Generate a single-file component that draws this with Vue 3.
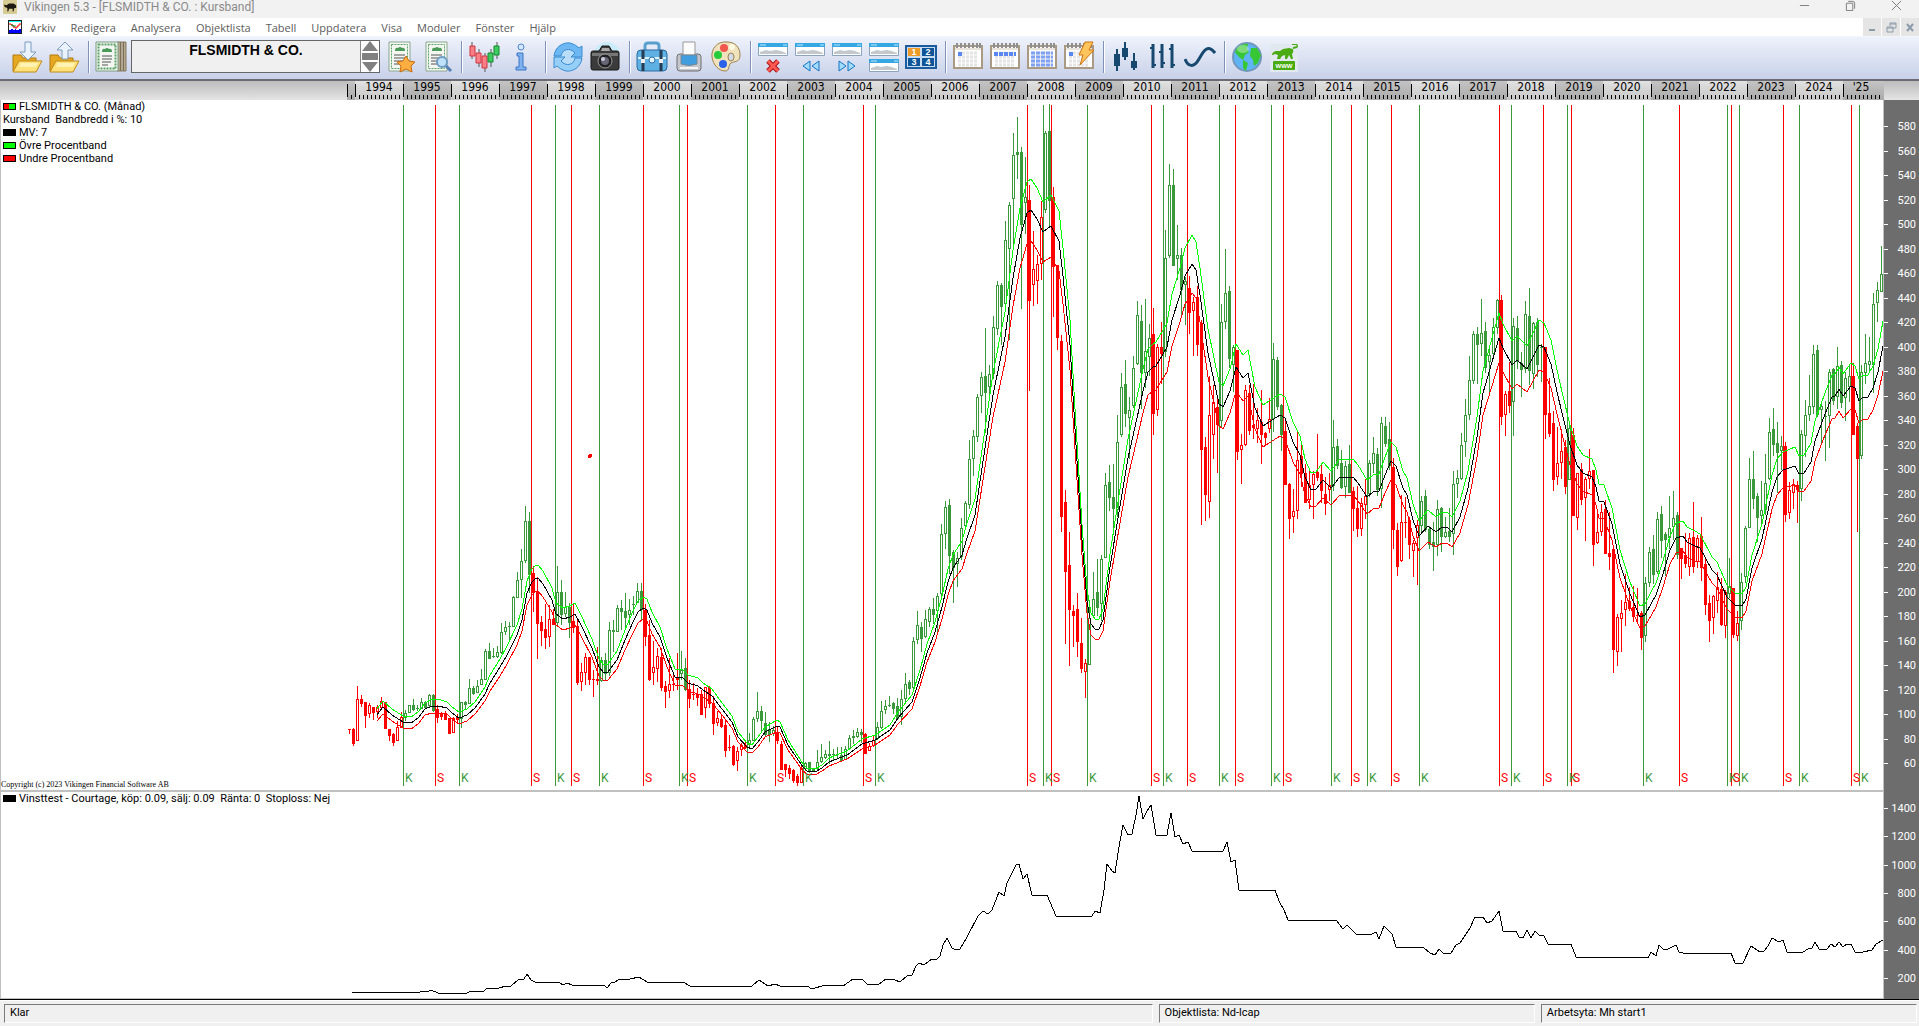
<template>
  <div class="app">
    <!-- Title bar -->
    <header class="title-bar">
      <svg class="app-icon" viewBox="0 0 16 16" aria-hidden="true">
        <rect width="16" height="16" rx="1" fill="#d6cc94" />
        <path d="M1 5l3 1 3-2 5 0 3 2 0 3-2 0-1 4-1 0 0-3-4 0-1 3-1 0 0-4-3-1z" fill="#1c1a12" />
      </svg>
      <h1 class="title">Vikingen 5.3 - [FLSMIDTH &amp; CO. : Kursband]</h1>
      <div class="window-buttons">
        <button type="button" aria-label="Minimera">
          <svg viewBox="0 0 12 12"><path d="M1 6h10" /></svg>
        </button>
        <button type="button" aria-label="Återställ">
          <svg viewBox="0 0 12 12"><path d="M1.500 3.500h7v8h-7zM3.500 1.500h5q2 0 2 2v6" /></svg>
        </button>
        <button type="button" aria-label="Stäng">
          <svg viewBox="0 0 12 12"><path d="M1 1l10 10M11 1L1 11" /></svg>
        </button>
      </div>
    </header>

    <!-- Menu -->
    <nav class="menu-bar">
      <svg class="menu-icon" viewBox="0 0 14 14" aria-hidden="true">
        <rect width="14" height="14" fill="#222" />
        <rect x="1" y="1" width="12" height="12" fill="#fff" />
        <path d="M1 1h12v1H1z" fill="#0ff" />
        <path d="M1 4h2v1h2v2h2v1h2v-2h2v-2h2" fill="none" stroke="#f00" />
        <path d="M3 5h2v1h3" fill="none" stroke="#093" />
        <path d="M1 10h2v-1h2v1h2v-1h1v1h3v-1h2v4H1z" fill="#00f" />
      </svg>
      <a v-for="item in menu" :key="item" href="#">{{ item }}</a>
      <div class="mdi-buttons">
        <button type="button" aria-label="Minimera fönster">
          <svg viewBox="0 0 12 12"><path d="M3 9h6" stroke-width="2" /></svg>
        </button>
        <button type="button" aria-label="Återställ fönster">
          <svg viewBox="0 0 12 12"><path d="M2 6h6v5H2zM2 7h6M5 5V2h6v5H8M5 3h6" /></svg>
        </button>
        <button type="button" aria-label="Stäng fönster">
          <svg viewBox="0 0 12 12"><path d="M3 3l6 7M9 3l-6 7" stroke-width="2" /></svg>
        </button>
      </div>
    </nav>

    <!-- Toolbar -->
    <div class="toolbar">
      <template v-for="(tool, index) in toolsLeft" :key="'l' + index">
        <span v-if="tool === '|'" class="separator"></span>
        <button v-else type="button" class="tool" :aria-label="tool">
          <svg viewBox="0 0 32 32" v-html="icons[tool]"></svg>
        </button>
      </template>
      <div class="object-picker">
        <input v-model="objectName" type="text" aria-label="Objekt" />
        <div class="spinner">
          <button type="button" aria-label="Föregående objekt">
            <svg viewBox="0 0 18 10"><path d="M9 0l8 10H1z" /></svg>
          </button>
          <button type="button" aria-label="Välj objekt" class="middle">
            <svg viewBox="0 0 18 8"><path d="M1 0h16v7H1z" /></svg>
          </button>
          <button type="button" aria-label="Nästa objekt">
            <svg viewBox="0 0 18 10"><path d="M1 0h16L9 10z" /></svg>
          </button>
        </div>
      </div>
      <template v-for="(tool, index) in toolsRight" :key="'r' + index">
        <span v-if="tool === '|'" class="separator"></span>
        <button v-else type="button" class="tool" :aria-label="tool">
          <svg viewBox="0 0 32 32" v-html="icons[tool]"></svg>
        </button>
      </template>
    </div>

    <!-- Time ruler -->
    <svg class="ruler" viewBox="0 0 1919 19" preserveAspectRatio="none" shape-rendering="crispEdges">
      <defs>
        <linearGradient id="rulerEdge" x1="0" y1="0" x2="0" y2="1">
          <stop offset="0" stop-color="#bcbcbc" /><stop offset="1" stop-color="#e4e4e4" />
        </linearGradient>
        <linearGradient id="rulerLight" x1="0" y1="0" x2="0" y2="1">
          <stop offset="0" stop-color="#e2e2e2" /><stop offset="1" stop-color="#c6c6c6" />
        </linearGradient>
        <linearGradient id="rulerDark" x1="0" y1="0" x2="0" y2="1">
          <stop offset="0" stop-color="#c4c4c4" /><stop offset="1" stop-color="#aaaaaa" />
        </linearGradient>
      </defs>
      <rect width="1919" height="19" fill="url(#rulerEdge)" />
      <rect x="347" width="8" height="19" fill="url(#rulerDark)" />
      <g v-for="(year, index) in years" :key="year">
        <rect
          :x="355 + index * 48"
          :width="index === 31 ? 41 : 48"
          height="19"
          :fill="index % 2 ? 'url(#rulerDark)' : 'url(#rulerLight)'"
        />
        <text :x="(index === 31 ? 1861 : 379 + index * 48)" y="10" class="year">{{ year }}</text>
      </g>
      <path :d="rulerTicks" fill="#000" />
    </svg>

    <!-- Charts -->
    <main class="charts">
      <div class="panes">
        <section class="pane price-pane">
          <svg viewBox="1 100 1882 690" preserveAspectRatio="none" shape-rendering="crispEdges">
            <g v-for="candle in candles" :key="candle.x">
              <path :d="candle.wick" :fill="candle.color" />
              <path v-if="candle.hole" :d="candle.hole" fill="#fff" />
            </g>
            <rect
              v-for="signal in signals"
              :key="signal.x"
              :x="signal.x"
              y="105"
              width="1"
              height="681"
              :fill="signal.color"
            />
            <polyline :points="upperBand" class="line upper" />
            <polyline :points="average" class="line average" />
            <polyline :points="lowerBand" class="line lower" />
            <text
              v-for="signal in signals"
              :key="'t' + signal.x"
              :x="signal.x + 2"
              y="782"
              class="signal"
              :fill="signal.color"
            >{{ signal.type }}</text>
            <ellipse cx="590" cy="456" rx="2" ry="2" fill="#f00" />
          </svg>
          <ul class="legend">
            <li><i class="swatch split"></i>FLSMIDTH &amp; CO. (Månad)</li>
            <li>Kursband&nbsp; Bandbredd i %: 10</li>
            <li><i class="swatch black"></i>MV: 7</li>
            <li><i class="swatch lime"></i>Övre Procentband</li>
            <li><i class="swatch red"></i>Undre Procentband</li>
          </ul>
          <p class="copyright">Copyright (c) 2023 Vikingen Financial Software AB</p>
        </section>
        <section class="pane profit-pane">
          <svg viewBox="1 792 1882 206" preserveAspectRatio="none" shape-rendering="crispEdges">
            <polyline :points="profit" class="line average" />
          </svg>
          <ul class="legend">
            <li><i class="swatch black"></i>Vinsttest - Courtage, köp: 0.09, sälj: 0.09&nbsp; Ränta: 0&nbsp; Stoploss: Nej</li>
          </ul>
        </section>
      </div>
      <svg class="scale" viewBox="0 100 35 899" preserveAspectRatio="none" shape-rendering="crispEdges">
        <g v-for="mark in scaleMarks" :key="mark.y">
          <rect x="0" :y="mark.y" width="4" height="1" fill="#fff" />
          <text x="32" :y="mark.y + 4">{{ mark.label }}</text>
        </g>
      </svg>
    </main>

    <!-- Status bar -->
    <footer class="status-bar">
      <div class="field">Klar</div>
      <div class="field">Objektlista: Nd-lcap</div>
      <div class="field">Arbetsyta: Mh start1</div>
    </footer>
  </div>
</template>

<script setup>
import { ref } from "vue";

const objectName = ref("FLSMIDTH & CO.");

const menu = ["Arkiv", "Redigera", "Analysera", "Objektlista", "Tabell", "Uppdatera", "Visa", "Moduler", "Fönster", "Hjälp"];

const toolsLeft = ["Hämta", "Spara", "|", "Anteckningar"];
const toolsRight = [
  "Favorit", "Sök", "|", "Diagram", "Info", "|", "Uppdatera", "Kamera", "|",
  "Portfölj", "Skriv ut", "Färger", "|", "Stäng fönster", "Bakåt", "Framåt", "Dela", "Layouter", "|",
  "Dag", "Vecka", "Månad", "Intradag", "|", "Candlestick", "Staplar", "Linje", "|", "Webb", "Vikingen",
];

// Icon parts shared by several buttons
const folder =
  '<path d="M2 14h8l2 3h13v13H2z" fill="#e6a820" stroke="#b27a10"/>' +
  '<path d="M8 20h23l-6 11H2z" fill="#ffe27a" stroke="#c08a18"/><path d="M10 22h17l-2 4H8z" fill="#fff3b4"/>';
const sheet =
  '<path d="M5 1h21v29H5z" fill="#f4f7f1" stroke="#8aa78e"/><path d="M7.500 3.500h16v24h-16z" fill="none" stroke="#5aa368" stroke-dasharray="2 1"/>' +
  '<path d="M11 10q0-4 3-3 2-2 4 0 3-1 3 3z" fill="#4a9a58"/><path d="M10 14h11M10 17h11M10 20h9M10 23h7" stroke="#555"/>';
const frame = (y) =>
  `<path d="M1.500 ${y + 0.5}h29v12h-29z" fill="#fff" stroke="#8ba3bd"/><path d="M1 ${y}h30v4H1z" fill="#35a8e4"/>` +
  `<path d="M3 ${y + 2}h6M26 ${y + 2}h4" stroke="#bfe7fb"/><path d="M3 ${y + 11}v-2l6-2 4 1 6-1 5 1 5 2v1z" fill="#c3c8cc"/>`;
const calendar =
  '<path d="M2 5h28v22H2z" fill="#fff" stroke="#aa9a84" stroke-width="2"/><path d="M3 7h26v2H3z" fill="#e9e4dc"/>' +
  '<path d="M5 2v5M9 2v5M13 2v5M17 2v5M21 2v5M25 2v5M28 2v5" stroke="#8f8f8f" stroke-width="2"/>' +
  '<path d="M6 12h20M6 16h20M6 20h20M6 24h20" stroke="#e4e4e4" stroke-width="3" stroke-dasharray="3 1"/>';

const icons = {
  "Hämta": folder + '<path d="M14 1h6v10h5l-8 8-8-8h5z" fill="#eaf3fb" stroke="#7d9cbc"/>',
  "Spara": folder + '<path d="M14 18h6V9h5L17 1 9 9h5z" fill="#eaf3fb" stroke="#7d9cbc"/>',
  "Anteckningar":
    '<path d="M22 1h9v29h-9z" fill="#b3a88f" stroke="#85795f"/><path d="M25.500 1v29M28.500 1v29" stroke="#7a7059"/>' +
    '<path d="M1 1h22v29H1z" fill="#f4f7f1" stroke="#7d9a80"/><path d="M3.500 3.500h17v24h-17z" fill="none" stroke="#5aa368" stroke-width="2" stroke-dasharray="2 1"/>' +
    '<path d="M7 11q0-4 3-3 2-2 4 0 3-1 3 3z" fill="#4a9a58"/><path d="M7 15h10M7 18h10M7 21h9M7 24h6" stroke="#555"/>',
  "Favorit": sheet + '<path d="M22 15l3 5 6 1-4 4 1 6-6-3-6 3 1-6-4-4 6-1z" fill="#ffae42" stroke="#c9690b"/>',
  "Sök": sheet + '<circle cx="21" cy="21" r="5" fill="#bfe2fa" stroke="#6f9cc4" stroke-width="2"/><path d="M25 25l5 5" stroke="#5580b5" stroke-width="3"/>',
  "Diagram":
    '<path d="M4 1v17M11 8v18M17 12v19M23 8v18M29 1v17" stroke="#555"/>' +
    '<path d="M2 5h5v10H2zM8 12h5v10H8zM14 15h5v12h-5z" fill="#fb7f86" stroke="#d0353f"/>' +
    '<path d="M20 12h5v9h-5zM26 5h5v9h-5z" fill="#3ecb5f" stroke="#12892f"/>',
  "Info":
    '<circle cx="16" cy="6" r="3" fill="#d5e8fb" stroke="#4a83cf"/><path d="M12 12h6v14h3v3H11v-3h3V15h-2z" fill="#7fb2ee" stroke="#3a74c6"/>',
  "Uppdatera":
    '<circle cx="16" cy="16" r="14" fill="#b9dcf8"/><path d="M2 15C3 6 11 1 18 2c4 1 7 3 9 5l3-2v11H19l4-4c-5-6-13-4-14 3z" fill="#6db8f2" stroke="#3b8bd2"/>' +
    '<path d="M30 17c-1 9-9 14-16 13-4-1-7-3-9-5l-3 2V16h11l-4 4c5 6 13 4 14-3z" fill="#95cff8" stroke="#3b8bd2"/>',
  "Kamera":
    '<circle cx="18" cy="14" r="13" fill="#c9ecf8"/><path d="M2 12q0-2 2-2h6l3-5h7l3 5h5q2 0 2 2v15q0 2-2 2H4q-2 0-2-2z" fill="#3b3b3b" stroke="#191919"/>' +
    '<path d="M3 12h26v3H3z" fill="#777"/><path d="M13 7h7l1 3h-9z" fill="#aaa"/><circle cx="16" cy="20" r="7" fill="#222" stroke="#999"/><circle cx="16" cy="20" r="4" fill="#667"/><circle cx="14" cy="18" r="2" fill="#ccd"/>',
  "Portfölj":
    '<path d="M9 10V5q0-3 3-3h8q3 0 3 3v5" fill="none" stroke="#5aa0cf" stroke-width="3"/><rect x="1" y="9" width="30" height="21" rx="4" fill="#5fb1e4" stroke="#2a6da4"/>' +
    '<path d="M2 17h28" stroke="#d9f0fd" stroke-width="2"/><path d="M7 9v21M25 9v21" stroke="#263c52" stroke-width="3"/><circle cx="16" cy="19" r="3" fill="#e8f6ff" stroke="#2a6da4"/><path d="M5 18h4v4H5zM23 18h4v4h-4z" fill="#eee"/>',
  "Skriv ut":
    '<path d="M4 16q0-3 3-3h18q3 0 3 3v11q0 3-3 3H7q-3 0-3-3z" fill="#c4c8ce" stroke="#6d6d6d"/><path d="M10 1h12v13H10z" fill="#fbfbfb" stroke="#999"/>' +
    '<path d="M8 14h16v9q-8 3-16 0z" fill="#3f9de0" stroke="#7b8794"/><path d="M7 27h18" stroke="#f4f4f4" stroke-width="2"/>',
  "Färger":
    '<path d="M17 1C7 0 1 8 2 16s7 14 13 14c5 0 3-6 6-8s9 0 9-8S25 1 17 1z" fill="#efe2bd" stroke="#9c834b"/>' +
    '<circle cx="14" cy="7" r="4" fill="#f2584c"/><circle cx="8" cy="14" r="4" fill="#26cc3a"/><circle cx="13" cy="23" r="4" fill="#2b62ea"/><circle cx="22" cy="6" r="3" fill="#fff8e0"/><ellipse cx="21" cy="16" rx="3" ry="4" fill="#d3dbe9" stroke="#9c834b"/>',
  "Stäng fönster": frame(2) + '<path d="M11 20l10 10M21 20L11 30" stroke="#a81212" stroke-width="5"/><path d="M11 20l10 10M21 20L11 30" stroke="#ff5a52" stroke-width="3"/>',
  "Bakåt": frame(2) + '<path d="M16 20v10l-7-5zM25 20v10l-7-5z" fill="#9fdcff" stroke="#1673c0"/>',
  "Framåt": frame(2) + '<path d="M8 20v10l7-5zM17 20v10l7-5z" fill="#9fdcff" stroke="#1673c0"/>',
  "Dela": frame(2) + frame(18),
  "Layouter":
    '<path d="M1 5h30v22H1z" fill="#c8ddf2" stroke="#1d5c9c" stroke-width="2"/><path d="M3 7h12v8H3z" fill="#ef9b28"/><path d="M17 7h12v8H17zM3 17h12v8H3zM17 17h12v8H17z" fill="#0f5597"/>' +
    '<g fill="#fff" font-family="Liberation Sans, sans-serif" font-size="9" font-weight="700" text-anchor="middle"><text x="9" y="14">1</text><text x="23" y="14">2</text><text x="9" y="24">3</text><text x="23" y="24">4</text></g>',
  "Dag": calendar + '<path d="M6 11h4v4H6z" fill="#5a86f0"/>',
  "Vecka": calendar + '<path d="M5 13h22" stroke="#5a86f0" stroke-width="4" stroke-dasharray="4 1"/>',
  "Månad": calendar + '<path d="M5 12h22M5 16h22M5 20h22M5 24h22" stroke="#7fa1f4" stroke-width="3" stroke-dasharray="4 1"/>',
  "Intradag": calendar + '<path d="M6 11h4v4H6z" fill="#5a86f0"/><path d="M22 1h8l-4 8h5L17 24l3-10h-4z" fill="#ffc45c" stroke="#cf7410"/>',
  "Candlestick": '<path d="M7 8v22M15 1v18M24 12v17" stroke="#17486f" stroke-width="2"/><path d="M4 13h6v12H4zM12 7h6v9h-6zM21 20h6v7h-6z" fill="#17486f"/>',
  "Staplar": '<path d="M6 3v24M15 3v24M25 3v24" stroke="#17486f" stroke-width="3"/><path d="M3 7h3M6 24h3M12 11h3M15 22h3M22 8h3M25 24h3" stroke="#17486f" stroke-width="2"/>',
  "Linje": '<path d="M1 18c3 8 9 9 14 0S24 3 31 12" fill="none" stroke="#17486f" stroke-width="3"/>',
  "Webb":
    '<circle cx="16" cy="16" r="14" fill="#5fb4f4" stroke="#7297bd" stroke-width="2"/><path d="M6 7q6-5 11-4l-1 5 2 3-4 3-2 5-4-3-4-5z" fill="#37c735"/>' +
    '<path d="M20 7l6 0 4 7-3 8-4 3-1-6-3-4zM12 19l5 3-2 8-3-3z" fill="#37c735"/><ellipse cx="12" cy="8" rx="6" ry="4" fill="#fff" opacity=".35"/>',
  "Vikingen":
    '<path d="M2 3h28v28H2z" fill="#e2e8ef"/><path d="M4 14q0-3 4-4l4 0 3-2 6-1 4 1V6l4-1-1-1h-4V3h5q2 2 0 4l-4 1q1 3-1 5l1 5h-2l-2-4-2 4h-2v-4l-3 1-2 3H9l1-4-3-1-2 1z" fill="#4bab12"/>' +
    '<rect x="5" y="20" width="22" height="9" rx="1" fill="#4bab12"/><text x="16" y="27" fill="#fff" font-family="Liberation Sans, sans-serif" font-size="6" font-weight="700" text-anchor="middle">WWW</text>',
};

const years = [];
for (let year = 1994; year < 2025; year++) years.push(String(year));
years.push("'25");

// One tick per month, a tall one at each new year
let rulerTicks = "M347 3h1v13h-1z";
for (let x = 351; x < 1883; x += 4) {
  rulerTicks += (x - 355) % 48 === 0 ? `M${x} 3h1v13h-1z` : `M${x} 14h1v4h-1z`;
}

const GREEN = "#3a993a";
const RED = "#ff0000";

// Buy (K) and sell (S) signals by position
const signals = [
  [403, "K"], [435, "S"], [459, "K"], [531, "S"], [555, "K"], [571, "S"], [599, "K"], [643, "S"],
  [679, "K"], [687, "S"], [747, "K"], [775, "S"], [803, "K"], [863, "S"], [875, "K"], [1027, "S"],
  [1043, "K"], [1051, "S"], [1087, "K"], [1151, "S"], [1163, "K"], [1187, "S"], [1219, "K"], [1235, "S"],
  [1271, "K"], [1283, "S"], [1331, "K"], [1351, "S"], [1367, "K"], [1391, "S"], [1419, "K"], [1499, "S"],
  [1511, "K"], [1543, "S"], [1567, "K"], [1571, "S"], [1643, "K"], [1679, "S"], [1727, "K"], [1731, "S"],
  [1739, "K"], [1783, "S"], [1799, "K"], [1851, "S"], [1859, "K"],
].map(([x, type]) => ({ x, type, color: type === "K" ? GREEN : RED }));

// Monthly bars as high, open, close, low
const bars = [
  [729,729,729,733],[728,729,743,745],[686,740,699,740],[695,699,703,706],[702,702,715,727],[703,713,705,717],
  [707,707,712,719],[705,711,707,717],[697,707,701,707],[702,702,728,728],[729,729,735,740],[733,734,742,745],
  [721,740,727,740],[712,727,717,727],[710,717,713,720],[705,712,705,712],[699,705,709,710],[705,708,708,710],
  [698,708,702,708],[701,702,707,707],[694,705,695,707],[694,695,710,711],[705,709,717,722],[712,714,716,719],
  [711,714,719,719],[718,718,733,733],[717,732,718,732],[714,717,719,723],[702,718,702,727],[701,702,704,708],
  [679,703,688,703],[686,688,693,694],[680,692,686,692],[669,684,679,684],[649,679,651,679],[643,651,658,658],
  [648,656,656,657],[646,656,652,657],[623,652,632,653],[621,631,627,634],[622,626,626,640],[596,626,597,626],
  [572,597,580,597],[549,579,561,597],[506,560,521,562],[512,521,574,592],[566,573,592,611],[577,591,623,658],
  [616,622,630,645],[604,629,637,648],[605,636,619,646],[609,619,624,624],[566,622,592,626],[580,592,614,624],
  [592,613,607,616],[603,607,622,637],[604,621,627,632],[619,626,682,684],[663,681,672,690],[653,672,657,684],
  [657,657,679,684],[670,679,679,696],[647,679,680,684],[657,680,660,681],[653,660,673,679],[622,672,630,675],
  [620,630,631,651],[605,631,608,631],[600,608,611,629],[593,611,617,629],[599,614,610,624],[596,604,604,614],
  [583,602,591,602],[583,591,609,619],[604,610,636,645],[620,635,679,680],[641,672,667,684],[648,668,656,681],
  [648,657,687,690],[681,686,691,707],[658,690,684,697],[672,684,684,690],[653,677,679,689],[651,673,670,679],
  [658,668,689,690],[680,689,698,707],[683,694,694,699],[688,694,697,705],[690,694,714,714],[687,707,687,717],
  [686,687,703,707],[696,703,723,734],[711,722,718,725],[715,719,726,727],[719,725,750,756],[735,747,747,750],
  [745,746,764,765],[747,760,751,770],[743,749,745,755],[740,745,747,748],[733,744,740,748],[717,740,719,740],
  [692,718,711,721],[706,711,720,731],[712,723,734,736],[722,729,734,741],[726,733,730,735],[727,732,740,743],
  [741,744,769,769],[764,764,769,776],[765,768,773,778],[769,770,780,782],[774,776,782,785],[766,782,768,782],
  [762,768,763,770],[762,762,771,772],[768,770,769,771],[750,768,762,770],[744,761,757,762],[750,757,754,758],
  [741,754,755,763],[749,754,754,760],[747,754,754,758],[747,755,760,760],[746,759,749,759],[735,748,738,748],
  [730,736,737,743],[728,736,732,737],[729,732,734,742],[733,734,753,753],[743,750,746,750],[735,745,740,746],
  [722,738,727,739],[701,727,711,728],[700,709,706,713],[696,705,705,706],[702,703,708,713],[698,706,718,718],
  [690,716,699,724],[673,698,684,701],[680,682,688,694],[637,687,641,691],[611,639,625,643],[622,627,638,651],
  [610,636,619,637],[607,621,609,626],[598,609,614,623],[593,610,596,633],[524,593,534,596],[501,533,507,548],
  [499,505,555,573],[550,552,567,602],[552,563,558,586],[518,556,528,559],[501,525,503,527],[440,504,459,508],
  [430,458,436,475],[394,436,397,441],[372,395,377,412],[328,376,392,432],[365,386,374,398],[316,373,327,378],
  [281,328,285,334],[283,285,306,344],[221,303,240,308],[202,248,205,339],[133,198,155,244],[117,152,154,178],
  [147,152,224,308],[157,202,197,233],[185,200,300,390],[231,284,269,305],[255,280,264,303],[201,263,217,279],
  [131,209,133,212],[104,131,200,226],[187,197,266,316],[265,265,337,349],[335,341,516,531],[490,502,571,643],
  [532,565,609,665],[605,611,615,646],[593,609,641,656],[618,643,668,672],[659,671,663,697],[600,664,618,664],
  [572,615,599,616],[559,592,607,615],[555,603,559,620],[473,557,485,557],[465,482,497,510],[464,497,508,534],
  [415,509,442,516],[373,434,387,436],[360,384,413,426],[397,417,410,458],[356,405,368,407],[301,363,315,364],
  [305,321,372,408],[299,372,351,387],[324,356,338,375],[308,334,413,434],[344,409,347,415],[322,347,353,383],
  [230,351,258,356],[164,255,185,257],[169,185,265,265],[225,258,255,279],[248,255,289,314],[277,284,281,324],
  [276,288,312,333],[297,310,302,355],[286,297,344,355],[320,323,449,524],[437,447,494,520],[376,501,415,517],
  [385,434,402,458],[395,407,424,472],[304,420,322,427],[249,321,293,328],[286,291,358,367],[345,364,347,391],
  [350,350,451,459],[434,449,445,483],[385,444,390,445],[385,393,430,434],[384,425,427,438],[408,428,420,442],
  [390,422,434,463],[432,433,437,444],[398,428,419,432],[343,418,359,431],[357,360,406,409],[404,405,434,450],
  [418,431,484,484],[483,484,518,538],[489,516,511,532],[431,510,460,518],[443,456,473,486],[464,473,502,502],
  [471,499,485,508],[471,484,474,518],[434,472,477,480],[464,474,490,502],[477,494,503,514],[473,489,485,500],
  [420,485,447,490],[439,446,465,468],[450,463,487,488],[461,486,466,497],[445,464,492,492],[487,491,508,530],
  [486,508,528,536],[498,528,503,535],[479,504,496,518],[460,493,463,496],[437,463,453,472],[448,454,489,495],
  [417,488,423,507],[417,426,443,446],[422,439,465,469],[458,467,529,548],[523,530,566,575],[495,560,522,561],
  [497,522,522,537],[517,520,544,558],[540,550,543,576],[520,537,525,584],[496,525,501,532],[490,496,529,531],
  [526,529,544,548],[522,542,546,570],[500,544,509,555],[507,508,536,551],[517,536,532,537],[508,531,536,541],
  [471,533,484,554],[470,483,478,497],[433,478,445,479],[399,441,415,456],[356,414,380,419],[331,380,334,383],
  [327,334,344,383],[299,343,333,355],[322,331,367,372],[345,361,355,395],[318,353,327,355],[299,327,300,333],
  [295,300,416,424],[391,414,394,435],[362,391,405,412],[318,401,326,435],[316,328,361,368],[352,363,369,396],
  [301,368,314,372],[288,316,370,384],[322,373,323,388],[318,322,364,376],[344,347,347,381],[347,347,414,438],
  [378,413,433,436],[411,423,479,490],[427,476,463,484],[429,462,451,478],[440,447,486,493],[421,479,428,479],
  [428,435,515,515],[473,517,473,529],[463,469,499,504],[477,497,479,540],[449,478,471,488],[470,470,544,565],
  [510,542,532,543],[504,531,512,535],[500,509,553,553],[512,553,556,569],[546,549,649,672],[614,651,617,665],
  [600,618,613,651],[574,609,602,625],[587,601,608,610],[586,607,616,621],[588,615,615,623],[611,613,637,649],
  [577,635,583,641],[547,582,552,586],[535,549,574,583],[512,571,519,573],[506,514,540,557],[532,534,539,575],
  [496,537,528,548],[491,526,518,539],[512,515,554,558],[548,548,558,578],[533,555,563,567],[533,566,538,575],
  [502,537,566,572],[535,561,538,567],[517,536,567,580],[559,564,604,614],[595,603,620,641],[595,617,596,633],
  [572,600,587,612],[578,589,624,625],[590,625,592,637],[558,593,586,597],[588,588,634,637],[611,635,623,640],
  [573,620,582,629],[526,576,528,582],[458,527,479,527],[451,479,498,508],[493,496,517,541],[481,515,510,525],
  [454,509,483,514],[418,478,432,479],[408,429,444,455],[422,443,452,492],[436,450,446,469],[442,446,514,521],
  [482,512,490,518],[479,492,484,508],[481,485,489,522],[430,488,434,500],[400,435,415,456],[375,414,406,420],
  [345,406,354,413],[345,350,414,416],[402,409,406,444],[401,416,416,460],[369,415,372,447],[368,369,400,404],
  [347,396,366,408],[361,365,402,407],[372,397,378,420],[364,386,376,401],[363,376,434,434],[423,426,458,531],
  [365,455,372,458],[334,372,363,383],[337,364,361,372],[293,364,304,392],[282,302,290,321],[246,291,274,291],
];

// A bar takes the colour of the latest signal; rising months are hollow
const candles = bars.map(([high, open, close, low], index) => {
  const x = 349 + index * 4;
  const last = signals.filter((signal) => signal.x < x).pop();
  const top = Math.min(open, close);
  const bottom = Math.max(open, close) + 1;
  return {
    x,
    color: last ? last.color : RED,
    wick: `M${x} ${high}h1V${low + 1}h-1zM${x - 1} ${top}h3V${bottom}h-3z`,
    hole: open > close && bottom - top > 2 ? `M${x} ${top + 1}h1V${bottom - 1}h-1z` : "",
  };
});

const averagePoints = [
  [377,715],[383,707],[392,715],[403,722],[411,723],[418,718],[425,709],[432,706],[438,706],[447,708],[452,713],
  [459,718],[467,715],[475,708],[485,694],[490,683],[500,667],[507,655],[517,635],[522,620],[527,593],[532,582],
  [535,579],[538,578],[543,584],[552,600],[556,614],[563,619],[570,617],[575,614],[582,627],[592,648],[599,667],
  [604,673],[608,672],[617,660],[625,640],[633,622],[638,612],[643,608],[647,610],[652,623],[660,637],[667,658],
  [675,677],[682,677],[688,683],[698,686],[703,690],[712,696],[722,709],[732,722],[738,737],[747,747],[752,749],
  [758,742],[765,732],[777,726],[780,727],[788,745],[803,767],[807,771],[815,772],[822,768],[829,762],[847,755],
  [862,744],[875,740],[890,730],[898,718],[912,702],[920,678],[927,653],[935,632],[942,607],[948,582],[953,568],
  [962,555],[967,538],[975,515],[985,448],[993,395],[1005,337],[1013,278],[1020,238],[1027,213],[1031,210],
  [1037,219],[1043,232],[1051,226],[1059,241],[1063,276],[1070,345],[1075,429],[1082,540],[1087,601],[1091,624],
  [1095,629],[1099,629],[1103,620],[1110,567],[1120,506],[1128,458],[1137,418],[1143,391],[1148,372],[1153,367],
  [1156,366],[1162,356],[1167,347],[1172,320],[1180,295],[1185,276],[1192,264],[1196,270],[1200,295],[1208,353],
  [1219,404],[1223,407],[1230,391],[1236,367],[1243,378],[1248,373],[1255,408],[1263,426],[1280,415],[1285,418],
  [1293,442],[1300,455],[1305,477],[1311,490],[1316,489],[1323,480],[1331,488],[1339,478],[1353,477],[1358,483],
  [1367,497],[1373,492],[1379,491],[1385,475],[1391,461],[1396,466],[1403,488],[1407,495],[1413,520],[1419,536],
  [1428,526],[1436,532],[1442,527],[1447,527],[1452,532],[1460,517],[1468,488],[1477,437],[1483,393],[1492,362],
  [1499,338],[1503,348],[1512,365],[1517,360],[1527,369],[1539,345],[1544,347],[1551,364],[1557,392],[1563,417],
  [1570,445],[1577,465],[1583,473],[1592,477],[1596,487],[1599,501],[1604,502],[1612,524],[1620,564],[1630,594],
  [1640,617],[1645,615],[1652,602],[1656,595],[1663,574],[1670,550],[1676,538],[1683,536],[1687,542],[1695,546],
  [1700,548],[1712,570],[1717,575],[1727,597],[1735,605],[1742,606],[1746,599],[1752,568],[1762,539],[1772,492],
  [1777,477],[1783,470],[1795,466],[1799,474],[1804,473],[1811,462],[1815,441],[1825,414],[1832,397],[1835,396],
  [1839,389],[1843,396],[1851,386],[1855,388],[1859,401],[1863,397],[1868,397],[1873,388],[1878,372],[1883,346],
];

const profitPoints = [
  [352,992],[420,992],[422,991],[427,992],[431,990],[438,993],[467,993],[471,991],[475,992],[484,991],[487,988],
  [499,988],[506,986],[511,986],[518,980],[524,979],[527,974],[531,980],[535,982],[559,982],[563,985],[567,983],
  [572,985],[604,985],[607,988],[611,983],[615,982],[620,979],[630,979],[639,977],[647,982],[683,982],[690,986],
  [752,986],[759,980],[768,986],[775,984],[780,986],[807,986],[812,989],[825,985],[843,986],[853,979],[862,979],
  [867,984],[879,984],[886,979],[895,980],[900,982],[907,976],[912,975],[916,966],[919,963],[924,965],[932,959],
  [936,960],[940,956],[943,945],[947,938],[952,948],[956,950],[960,949],[967,937],[978,916],[983,911],[988,914],
  [992,910],[999,892],[1004,896],[1007,883],[1016,865],[1019,864],[1023,879],[1027,874],[1032,895],[1047,895],
  [1056,916],[1092,916],[1095,911],[1100,913],[1104,890],[1107,864],[1112,871],[1115,873],[1119,847],[1123,825],
  [1128,835],[1132,834],[1136,815],[1139,796],[1143,819],[1147,811],[1151,805],[1156,835],[1167,835],[1171,813],
  [1175,837],[1179,835],[1183,844],[1188,842],[1192,851],[1223,851],[1227,842],[1231,862],[1235,860],[1239,890],
  [1275,890],[1279,901],[1284,910],[1288,920],[1336,920],[1343,929],[1347,925],[1356,934],[1372,934],[1376,932],
  [1379,939],[1384,926],[1392,934],[1396,947],[1423,947],[1430,953],[1435,955],[1439,949],[1443,953],[1451,953],
  [1456,945],[1460,943],[1470,928],[1475,917],[1483,917],[1487,923],[1492,921],[1499,911],[1503,931],[1516,931],
  [1519,937],[1523,938],[1527,930],[1531,938],[1535,931],[1539,935],[1544,936],[1548,944],[1571,944],[1576,957],
  [1645,957],[1648,958],[1651,952],[1656,956],[1659,945],[1663,949],[1668,949],[1676,945],[1679,952],[1683,953],
  [1731,953],[1735,963],[1743,963],[1751,946],[1760,952],[1764,951],[1768,946],[1772,938],[1779,942],[1783,940],
  [1787,952],[1803,952],[1808,949],[1812,948],[1815,942],[1819,949],[1827,949],[1831,944],[1835,947],[1839,942],
  [1843,947],[1847,944],[1851,944],[1855,952],[1863,952],[1872,950],[1876,944],[1883,940],
];

// y of price zero, the bands are a share of the average above and below it
const ZERO = 837;
const band = (factor) =>
  averagePoints.map(([x, y]) => `${x},${Math.round(ZERO - (ZERO - y) * factor)}`).join(" ");

const average = band(1);
const upperBand = band(1.05);
const lowerBand = band(0.95);
const profit = profitPoints.join(" ");

const scaleMarks = [];
for (let price = 580; price >= 60; price -= 20) {
  scaleMarks.push({ label: price, y: Math.round(763 - (price - 60) * 1.2242) });
}
for (let value = 1400; value >= 200; value -= 200) {
  scaleMarks.push({ label: value, y: Math.round(978 - (value - 200) * 0.1417) });
}
</script>

<style>
body {
  margin: 0;
}
</style>

<style scoped>
.app {
  display: flex;
  flex-direction: column;
  height: 100vh;
  background: #f0f0f0;
  color: #000;
  font-family: Roboto, "Liberation Sans", Arial, sans-serif;
  font-size: 11px;
}

button {
  padding: 0;
  border: none;
  background: none;
}

svg {
  display: block;
}

/* Title bar */
.title-bar {
  display: flex;
  align-items: center;
  height: 18px;
  background: #f2f2f2;
}

.app-icon {
  width: 16px;
  height: 14px;
  margin: 0 6px 4px 2px;
}

.title {
  flex: 1;
  margin: 0 0 4px;
  color: #8a8a8a;
  font-size: 12px;
  font-weight: 400;
  line-height: 14px;
}

.window-buttons {
  display: flex;
  margin-bottom: 7px;
}

.window-buttons button {
  display: grid;
  place-items: center;
  width: 46px;
  height: 11px;
}

.window-buttons svg {
  width: 11px;
  height: 11px;
  fill: none;
  stroke: #777;
}

/* Menu */
.menu-bar {
  display: flex;
  align-items: center;
  gap: 15px;
  height: 18px;
  padding-left: 8px;
  background: #fff;
}

.menu-icon {
  width: 14px;
  height: 14px;
  margin-right: -7px;
}

.menu-bar a {
  color: #5c5c5c;
  font-family: "Open Sans", sans-serif;
  font-size: 11px;
  text-decoration: none;
}

.mdi-buttons {
  display: flex;
  gap: 1px;
  margin-left: auto;
}

.mdi-buttons button {
  display: grid;
  place-items: center;
  width: 18px;
  height: 18px;
  background: #e5e5e5;
}

.mdi-buttons svg {
  width: 12px;
  height: 12px;
  fill: none;
  stroke: #8b9bab;
}

/* Toolbar */
.toolbar {
  display: flex;
  align-items: center;
  height: 43px;
  padding: 0 0 3px 8px;
  box-sizing: border-box;
  border-top: 1px solid #f3f5fb;
  background: linear-gradient(#eef2fb, #c8d1e9);
}

.tool {
  display: grid;
  place-items: center;
  width: 37px;
  height: 36px;
}

.tool svg {
  width: 32px;
  height: 32px;
}

.separator {
  width: 3px;
  height: 32px;
  margin-left: 6px;
  border-left: 1px solid #7f93b8;
  box-shadow: inset 1px 0 #fff;
}

.object-picker {
  display: flex;
  width: 249px;
  height: 33px;
  margin: 0 1px 0 2px;
  box-sizing: border-box;
  border: 1px solid #666;
  background: #f0f0f0;
}

.object-picker input {
  flex: 1;
  min-width: 0;
  padding: 0 0 14px;
  border: none;
  background: none;
  color: #000;
  font: bold 14px "Liberation Sans", Arial, sans-serif;
  text-align: center;
}

.spinner {
  display: flex;
  flex-direction: column;
  justify-content: space-between;
  width: 18px;
  border-left: 1px solid #888;
  background: #fff;
}

.spinner svg {
  width: 18px;
  height: 10px;
  fill: #808080;
}

.spinner .middle svg {
  height: 8px;
}

/* Time ruler */
.ruler {
  width: 100%;
  height: 21px;
  box-sizing: border-box;
  border-top: 2px solid #6b6b72;
}

.year {
  font-family: "DejaVu Sans Condensed", "DejaVu Sans", sans-serif;
  font-size: 12px;
  text-anchor: middle;
}

/* Charts */
.charts {
  display: flex;
  flex: 1;
  min-height: 0;
  border-bottom: 1px solid #000;
}

.panes {
  display: flex;
  flex: 1;
  flex-direction: column;
  border: solid #c0c0c0;
  border-width: 0 1px 1px;
  background: #fff;
}

.pane {
  position: relative;
  min-height: 0;
}

.pane svg {
  width: 100%;
  height: 100%;
}

.price-pane {
  flex: 690 1 0;
}

.profit-pane {
  flex: 206 1 0;
  border-top: 2px solid #c0c0c0;
}

.line {
  fill: none;
  stroke-width: 1px;
}

.upper {
  stroke: #00ff00;
}

.average {
  stroke: #000;
}

.lower {
  stroke: #ff0000;
}

.signal {
  font-size: 12px;
}

/* Legends lie over the chart */
.legend {
  position: absolute;
  top: 0;
  left: 2px;
  margin: 0;
  padding: 0;
  list-style: none;
  line-height: 13px;
}

.legend li {
  display: flex;
  align-items: center;
  white-space: nowrap;
}

.swatch {
  width: 11px;
  height: 5px;
  margin-right: 3px;
  border: 1px solid #000;
}

.split {
  background: linear-gradient(90deg, #f00 50%, #0f0 50%);
}

.black {
  background: #000;
}

.lime {
  background: #0f0;
}

.red {
  background: #f00;
}

.copyright {
  position: absolute;
  bottom: 1px;
  left: 0;
  margin: 0;
  font: 8px "Liberation Serif", "Times New Roman", serif;
}

.scale {
  width: 35px;
  height: 100%;
  background: #6d6d6d;
}

.scale text {
  fill: #fff;
  font-size: 11px;
  text-anchor: end;
}

/* Status bar */
.status-bar {
  display: grid;
  grid-template-columns: 1148fr 376fr 376fr;
  gap: 6px;
  height: 26px;
  padding: 3px 2px 3px 4px;
  box-sizing: border-box;
  border-top: 1px solid #fff;
}

.field {
  padding-left: 5px;
  border: 1px solid;
  border-color: #7a7a7a #fff #fff #7a7a7a;
  line-height: 15px;
}
</style>
